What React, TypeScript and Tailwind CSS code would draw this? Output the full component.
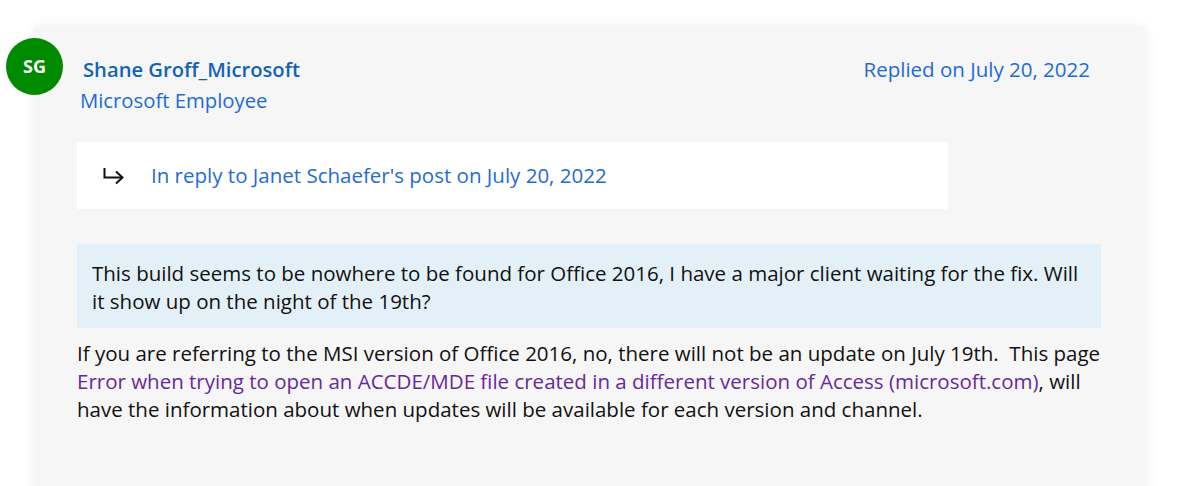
import React from "react";

export default function App() {
  return (
    <div className="w-[1203px] h-[486px] bg-white overflow-hidden relative" style={{ fontFamily: '"Open Sans", "Noto Sans", sans-serif' }}>
      <div className="absolute left-[6px] top-[38px] w-[57px] h-[57px] rounded-full bg-[#008a00] flex items-center justify-center z-10">
        <span className="text-white text-[18px] font-bold">SG</span>
      </div>
      <div className="ml-[34px] mt-[27px] w-[1111px] h-[470px] bg-[#f6f6f6] shadow-[0_0_12px_rgba(0,0,0,0.07)] pl-[43px] pr-[44px] pt-[28px]">
        <div className="flex justify-between">
          <div className="flex flex-col">
            <span className="text-[20.2px] leading-[28px] font-semibold text-[#1163b8] pl-[6px]">Shane Groff_Microsoft</span>
            <span className="text-[20.3px] leading-[28px] text-[#1f6bd6] mt-[3px] pl-[3px]">Microsoft Employee</span>
          </div>
          <span className="text-[20.5px] leading-[28px] text-[#1f6bd6] pr-[11px]">Replied on July 20, 2022</span>
        </div>
        <div className="mt-[28px] w-[871px] h-[67px] bg-white flex items-center pl-[26px]">
          <svg width="22" height="18" viewBox="0 0 22 18" className="mr-[26px]">
            <path d="M1.5 1 V10.5 H19" fill="none" stroke="#111" strokeWidth="2" />
            <path d="M13 4.5 L19.5 10.5 L13 16.5" fill="none" stroke="#111" strokeWidth="2" />
          </svg>
          <span className="text-[20.5px] text-[#1f6bd6]">In reply to Janet Schaefer's post on July 20, 2022</span>
        </div>
        <div className="mt-[35px] bg-[#e3f0f8] px-[15px] pt-[15px] pb-[13px] text-[20.5px] leading-[28px] text-[#111]">
          <div className="whitespace-nowrap">This build seems to be nowhere to be found for Office 2016, I have a major client waiting for the fix. Will</div>
          <div className="whitespace-nowrap">it show up on the night of the 19th?</div>
        </div>
        <div className="mt-[11px] text-[20.5px] leading-[28px] text-[#111]">
          <div className="whitespace-pre">{"If you are referring to the MSI version of Office 2016, no, there will not be an update on July 19th.  This page"}</div>
          <div className="whitespace-nowrap">
            <span className="text-[#68289e]">Error when trying to open an ACCDE/MDE file created in a different version of Access (microsoft.com)</span>, will
          </div>
          <div className="whitespace-nowrap">have the information about when updates will be available for each version and channel.</div>
        </div>
      </div>
    </div>
  );
}
